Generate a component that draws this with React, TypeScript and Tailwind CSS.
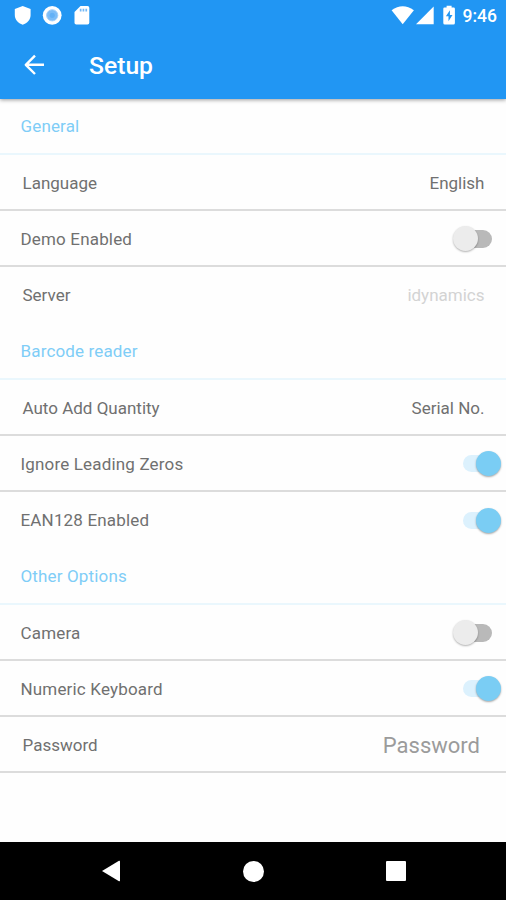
import { useState } from "react";
import type { ReactNode } from "react";

interface RowProps {
  label: string;
  inset?: boolean;
  last?: boolean;
  children?: ReactNode;
}

const SectionTitle = ({ title }: { title: string }) => (
  <h2 className="flex h-[56.25px] items-center border-b-2 border-[#eaf7fd] pl-[20.5px] pt-[3px] text-[17px] tracking-[0.15px] text-[#7fcdf7]">
    {title}
  </h2>
);

const Row = ({ label, inset, last, children }: RowProps) => (
  <div
    className={`flex h-[56.25px] items-center justify-between border-b-2 pt-[3px] text-[17px] text-[#707070] ${
      last ? "border-transparent" : "border-[#dcdcdc]"
    } ${inset ? "pl-[22.5px]" : "pl-[20.5px] tracking-[0.17px]"}`}
  >
    <span>{label}</span>
    {children}
  </div>
);

const Value = ({ text }: { text: string }) => (
  <span className="pr-[21.5px]">{text}</span>
);

const Toggle = ({ initial = false }: { initial?: boolean }) => {
  const [on, setOn] = useState(initial);

  return (
    <button
      role="switch"
      aria-checked={on}
      onClick={() => setOn(!on)}
      className={`mb-[1.5px] flex h-[26px] items-center ${
        on ? "mr-[5px]" : "mr-[14.5px]"
      }`}
    >
      {on ? (
        <>
          <span className="h-[17px] w-[26px] rounded-l-full bg-[#dcf1fd]" />
          <span className="-ml-[13px] size-[25px] rounded-full bg-[#7acdf4] shadow-[0_1px_2px_rgba(0,0,0,0.35)]" />
        </>
      ) : (
        <>
          <span className="z-10 size-[25px] rounded-full bg-[#ececec] shadow-[0_1px_2px_rgba(0,0,0,0.3)]" />
          <span className="-ml-[13px] h-[18px] w-[27px] rounded-r-full bg-[#b9b9b9]" />
        </>
      )}
    </button>
  );
};

const StatusBar = () => (
  <div className="flex h-[32px] items-center justify-between pl-[14px] pr-[9px]">
    <svg width="78" height="32" viewBox="14 0 78 32" fill="#fff">
      <path d="M22.7 6 30.6 9v6c0 4.600-3.300 8.200-7.900 9.700-4.600-1.500-7.900-5.100-7.900-9.700V9z" />
      <circle cx="52.200" cy="15.300" r="9.400" />
      <circle cx="52.200" cy="15.300" r="5.600" fill="#7dbdf7" stroke="#a3d0fa" strokeWidth="1" />
      <circle cx="52.200" cy="15.300" r="2.600" fill="#64b1f6" />
      <path d="M80.500 6H87.500q1.800 0 1.800 1.800V22.700q0 1.800-1.800 1.800H76.300q-1.800 0-1.800-1.800V12z" />
      <path d="M79.800 8.700h1.700v2.800h-1.700zM82.600 8.700h1.700v2.800h-1.700zM85.400 8.700h1.700v2.800h-1.700z" fill="#75b9f6" />
    </svg>
    <div className="flex items-center">
      <svg width="66" height="32" viewBox="390 0 66 32" fill="#fff">
        <path d="M390.600 10.300Q401.700 2.300 412.900 10.300L401.700 24.300z" />
        <path d="M432.700 6.400V24.300H415z" />
        <path d="M445.600 5.800h5v1.800h2.100q1.200 0 1.200 1.200V23q0 1.500-1.500 1.500h-8.600q-1.500 0-1.500-1.500V8.800q0-1.200 1.200-1.200h2.100z" />
        <path d="M448.900 10.300 444.900 16.300h2.600v4.900l4-6.300h-2.600z" fill="#2196f3" />
      </svg>
      <span className="ml-[6px] pt-px text-[17.500px] font-medium leading-none">
        9:46
      </span>
    </div>
  </div>
);

const App = () => {
  return (
    <div className="flex h-[900px] w-[506px] flex-col overflow-hidden bg-[#fefefe] font-[Roboto,sans-serif]">
      <header className="z-10 h-[99px] shrink-0 bg-[#2196f3] text-white shadow-[0_1px_4px_rgba(0,0,0,0.4)]">
        <StatusBar />
        <div className="flex h-[67px] items-center">
          <svg
            className="mb-[2px] ml-[23px]"
            width="24"
            height="24"
            viewBox="0 0 24 24"
            fill="none"
            stroke="#fff"
            strokeWidth="2.400"
            strokeLinejoin="round"
          >
            <path d="M21 11.800H3M12 2.600 2.800 11.800 12 21" />
          </svg>
          <h1 className="ml-[42px] pt-px text-[24.700px] font-medium leading-none">
            Setup
          </h1>
        </div>
      </header>

      <main className="-mt-[0.6px] flex-1">
        <SectionTitle title="General" />
        <Row label="Language" inset>
          <Value text="English" />
        </Row>
        <Row label="Demo Enabled">
          <Toggle />
        </Row>
        <Row label="Server" inset last>
          <span className="pr-[21.5px] text-[#d3d3d3]">idynamics</span>
        </Row>

        <SectionTitle title="Barcode reader" />
        <Row label="Auto Add Quantity" inset>
          <Value text="Serial No." />
        </Row>
        <Row label="Ignore Leading Zeros">
          <Toggle initial />
        </Row>
        <Row label="EAN128 Enabled" last>
          <Toggle initial />
        </Row>

        <SectionTitle title="Other Options" />
        <Row label="Camera">
          <Toggle />
        </Row>
        <Row label="Numeric Keyboard">
          <Toggle initial />
        </Row>
        <Row label="Password" inset>
          <span className="pr-[26px] text-[22px] text-[#9b9b9b]">Password</span>
        </Row>
      </main>

      <nav className="flex h-[58px] shrink-0 items-center justify-between bg-black pl-[101px] pr-[100px]">
        <svg width="20" height="22" viewBox="0 0 20 22" fill="#fff">
          <path d="M1 11 18 .8q1-.5 1 .6v19.200q0 1.100-1 .6z" />
        </svg>
        <span className="size-[21px] rounded-full bg-white" />
        <span className="size-[20px] rounded-[1px] bg-white" />
      </nav>
    </div>
  );
};

export default App;
